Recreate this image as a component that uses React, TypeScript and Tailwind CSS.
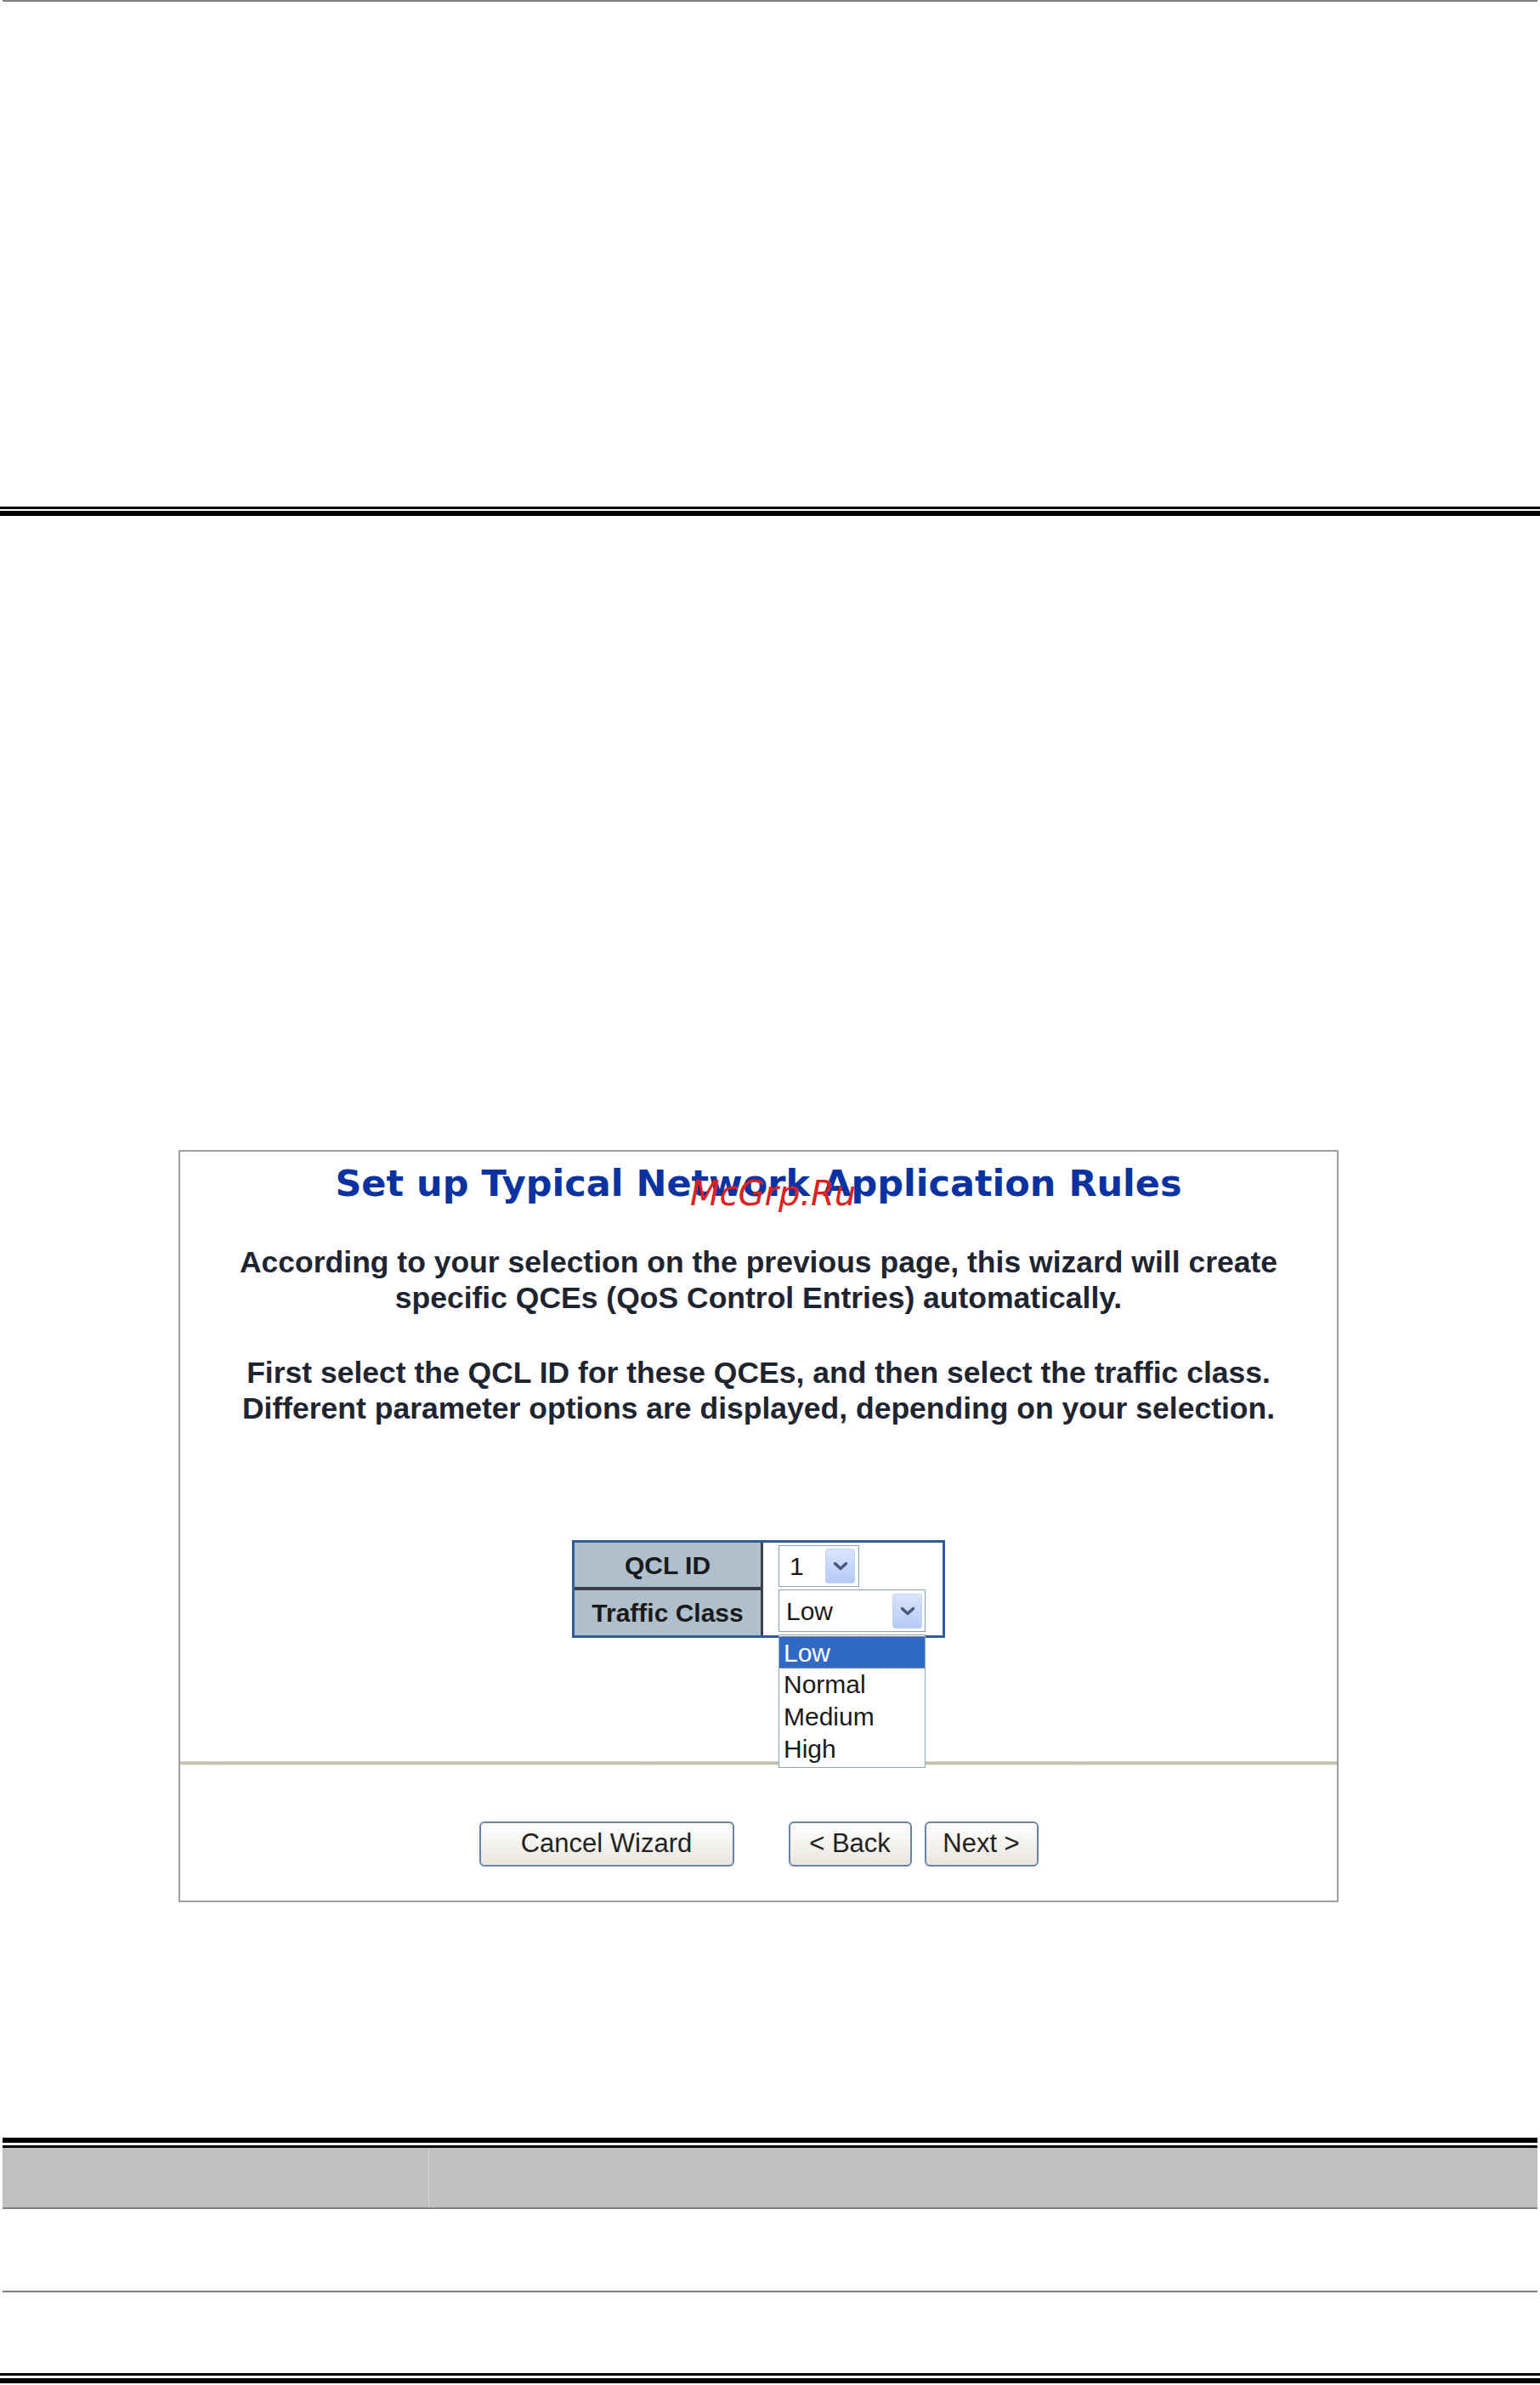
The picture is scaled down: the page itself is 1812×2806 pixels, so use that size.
import React from 'react';

const sans = "font-['Liberation_Sans',Arial,sans-serif]";

function Chevron() {
  return (
    <svg width="18" height="11" viewBox="0 0 18 11">
      <polyline points="2.5,2.5 9,8.5 15.5,2.5" fill="none" stroke="#46597c" strokeWidth="3.4" strokeLinecap="round" strokeLinejoin="round" />
    </svg>
  );
}

function DropButton() {
  return (
    <div className="w-[35px] h-[41px] rounded-[3px] border border-[#c3d3f3] bg-linear-to-b from-[#dae5fd] to-[#b4c9f6] flex items-center justify-center">
      <Chevron />
    </div>
  );
}

function Button({ label, width }: { label: string; width: string }) {
  return (
    <button
      className={`${width} h-[53px] rounded-[6px] border-2 border-[#6a82a3] bg-linear-to-b from-white to-[#e9e6dd] text-[31px] text-[#222] ${sans} flex items-center justify-center`}
    >
      {label}
    </button>
  );
}

export default function App() {
  const options = ['Low', 'Normal', 'Medium', 'High'];

  return (
    <div className="w-[1812px] h-[2806px] bg-white flex flex-col overflow-hidden">
      {/* page header rule */}
      <div className="h-[2px] mx-[3px] bg-[#808080]" />

      <div className="mt-[594px] h-[3px] bg-black" />
      <div className="mt-[2px] h-[6px] bg-black" />

      {/* wizard box */}
      <div className="relative mt-[746px] ml-[210px] w-[1365px] h-[885px] border-2 border-[#a0a0a0] flex flex-col items-center">
        <h1 className="pt-[11px] text-[43px] leading-[52px] font-bold text-[#0a32a0] font-['DejaVu_Sans',Verdana,sans-serif]">
          Set up Typical Network Application Rules
        </h1>
        <span className="absolute left-[600px] top-[29px] text-[40px] leading-[40px] italic text-[#dd2020] font-['DejaVu_Sans',sans-serif]">
          McGrp.Ru
        </span>

        <p className={`mt-[46px] text-center text-[35.5px] leading-[42px] font-bold text-[#1f2530] ${sans}`}>
          According to your selection on the previous page, this wizard will create
          <br />
          specific QCEs (QoS Control Entries) automatically.
        </p>
        <p className={`mt-[46px] text-center text-[35.5px] leading-[42px] font-bold text-[#1f2530] ${sans}`}>
          First select the QCL ID for these QCEs, and then select the traffic class.
          <br />
          Different parameter options are displayed, depending on your selection.
        </p>

        {/* settings table */}
        <div className={`mt-[134px] w-[439px] h-[115px] border-[3px] border-[#2f5d9b] flex ${sans} text-[#1a1a1a]`}>
          <div className="w-[222px] flex flex-col bg-[#b0bfcc] border-r-[3px] border-[#3a3f48]">
            <div className="h-[52px] flex items-center justify-center text-[30px] font-bold">QCL ID</div>
            <div className="h-[4px] bg-[#3a3f48]" />
            <div className="flex-1 flex items-center justify-center text-[30px] font-bold">Traffic Class</div>
          </div>
          <div className="relative flex-1 pl-[18px] pt-[3px] flex flex-col items-start gap-[3px]">
            <div className="w-[95px] h-[49px] border border-[#8aa2c2] bg-white flex items-center justify-between pl-[12px] pr-[4px] text-[30px]">
              <span>1</span>
              <DropButton />
            </div>
            <div className="w-[173px] h-[50px] border border-[#8aa2c2] bg-white flex items-center justify-between pl-[8px] pr-[3px] text-[30px]">
              <span>Low</span>
              <DropButton />
            </div>

            {/* open option list */}
            <div className="absolute left-[18px] top-[108px] w-[173px] h-[157px] z-10 border border-[#8ea6c6] bg-white pt-[1px] flex flex-col text-[30px]">
              {options.map((o, i) => (
                <div
                  key={o}
                  className={`h-[38px] leading-[38px] pl-[5px] ${
                    i === 0 ? 'bg-[#3169c6] text-white border-y border-dotted border-[#c9a45e]' : 'text-[#1a1a1a]'
                  }`}
                >
                  {o}
                </div>
              ))}
            </div>
          </div>
        </div>

        {/* separator */}
        <div className="mt-[145px] w-full h-[5px] bg-linear-to-b from-[#dedcd4] via-[#b9b8a6] to-[#f3f0e3]" />

        <div className="mt-[66px] flex items-center">
          <Button label="Cancel Wizard" width="w-[300px]" />
          <div className="ml-[64px]">
            <Button label="< Back" width="w-[145px]" />
          </div>
          <div className="ml-[15px]">
            <Button label="Next >" width="w-[134px]" />
          </div>
        </div>
      </div>

      {/* parameter table */}
      <div className="mt-[277px] mx-[3px] flex flex-col">
        <div className="h-[6px] bg-black" />
        <div className="mt-[3px] h-[3px] bg-black" />
        <div className="h-[72px] grid grid-cols-[502px_1fr] bg-[#c0c0c0] border-b-2 border-[#808080]">
          <div className="border-r border-[#d2d2d2]" />
          <div />
        </div>
        <div className="h-[96px]" />
        <div className="h-[2px] bg-[#808080]" />
      </div>

      <div className="mt-[95px] h-[3px] bg-black" />
      <div className="mt-[3px] h-[6px] bg-black" />
    </div>
  );
}
